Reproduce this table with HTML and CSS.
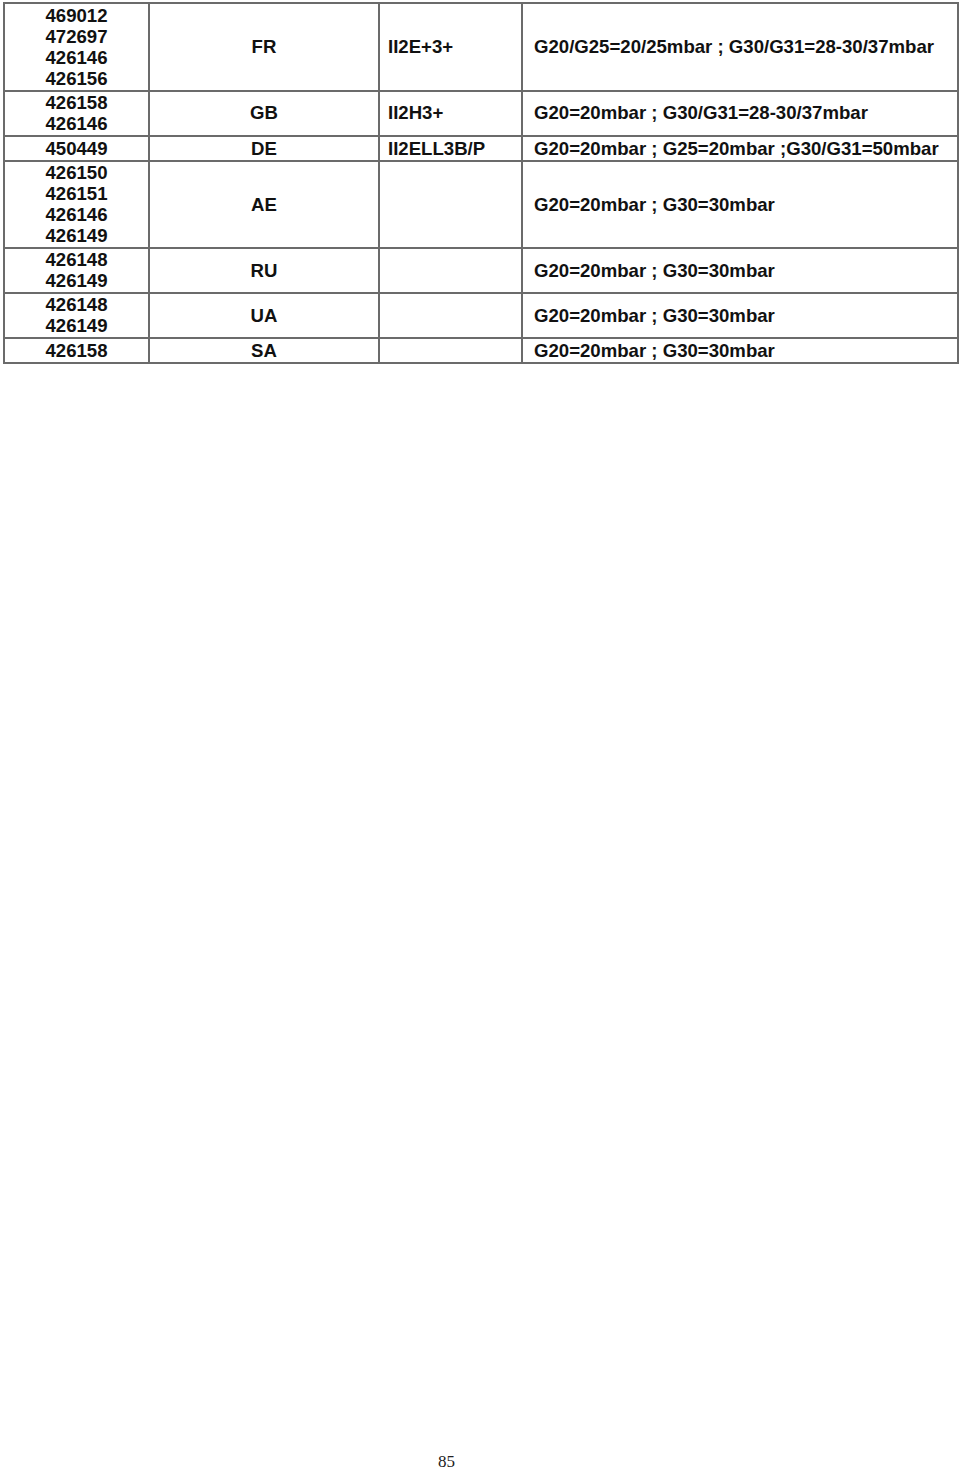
FILE: index.html
```html
<!DOCTYPE html>
<html>
<head>
<meta charset="utf-8">
<link rel="stylesheet" href="styles.css">
</head>
<body>
<div class="page">
  <table class="gas">
    <colgroup>
      <col class="c1"><col class="c2"><col class="c3"><col class="c4">
    </colgroup>
    <tbody>
      <tr class="r4">
        <td class="codes">469012<br>472697<br>426146<br>426156</td>
        <td class="country">FR</td>
        <td class="cat">II2E+3+</td>
        <td class="press">G20/G25=20/25mbar ; G30/G31=28-30/37mbar</td>
      </tr>
      <tr class="r2">
        <td class="codes">426158<br>426146</td>
        <td class="country">GB</td>
        <td class="cat">II2H3+</td>
        <td class="press">G20=20mbar ; G30/G31=28-30/37mbar</td>
      </tr>
      <tr class="r1">
        <td class="codes">450449</td>
        <td class="country">DE</td>
        <td class="cat">II2ELL3B/P</td>
        <td class="press">G20=20mbar ; G25=20mbar ;G30/G31=50mbar</td>
      </tr>
      <tr class="r4">
        <td class="codes">426150<br>426151<br>426146<br>426149</td>
        <td class="country">AE</td>
        <td class="cat"></td>
        <td class="press">G20=20mbar ; G30=30mbar</td>
      </tr>
      <tr class="r2">
        <td class="codes">426148<br>426149</td>
        <td class="country">RU</td>
        <td class="cat"></td>
        <td class="press">G20=20mbar ; G30=30mbar</td>
      </tr>
      <tr class="r2">
        <td class="codes">426148<br>426149</td>
        <td class="country">UA</td>
        <td class="cat"></td>
        <td class="press">G20=20mbar ; G30=30mbar</td>
      </tr>
      <tr class="r1">
        <td class="codes">426158</td>
        <td class="country">SA</td>
        <td class="cat"></td>
        <td class="press">G20=20mbar ; G30=30mbar</td>
      </tr>
    </tbody>
  </table>
  <div class="footer">85</div>
</div>
</body>
</html>
```

FILE: styles.css
```css
html, body {
  margin: 0;
  padding: 0;
  background: #ffffff;
}

.page {
  height: 1469px;
  display: flex;
  flex-direction: column;
  box-sizing: border-box;
  padding: 2px 0 0 3px;
}

.gas {
  border-collapse: collapse;
  table-layout: fixed;
  width: 954px;
  font-family: "Liberation Sans", Arial, sans-serif;
  font-weight: bold;
  font-size: 18.6px;
  line-height: 21px;
  color: #111111;
}

.gas .c1 { width: 145px; }
.gas .c2 { width: 230px; }
.gas .c3 { width: 143px; }
.gas .c4 { width: 436px; }

.gas td {
  border: 2px solid #6b6b6b;
  padding: 0 0 1px 0;
  vertical-align: middle;
  white-space: nowrap;
}

.gas tr.r1 td {
  padding-top: 1px;
}

.gas tr.r4 td {
  padding-top: 0.5px;
}

.gas td.codes,
.gas td.country {
  text-align: center;
}

.gas td.cat {
  padding-left: 8px;
}

.gas td.press {
  padding-left: 11px;
}

.footer {
  margin-top: auto;
  padding-left: 435px;
  font-family: "Liberation Serif", "Times New Roman", serif;
  font-size: 17px;
  line-height: 14px;
  color: #222222;
}
```
